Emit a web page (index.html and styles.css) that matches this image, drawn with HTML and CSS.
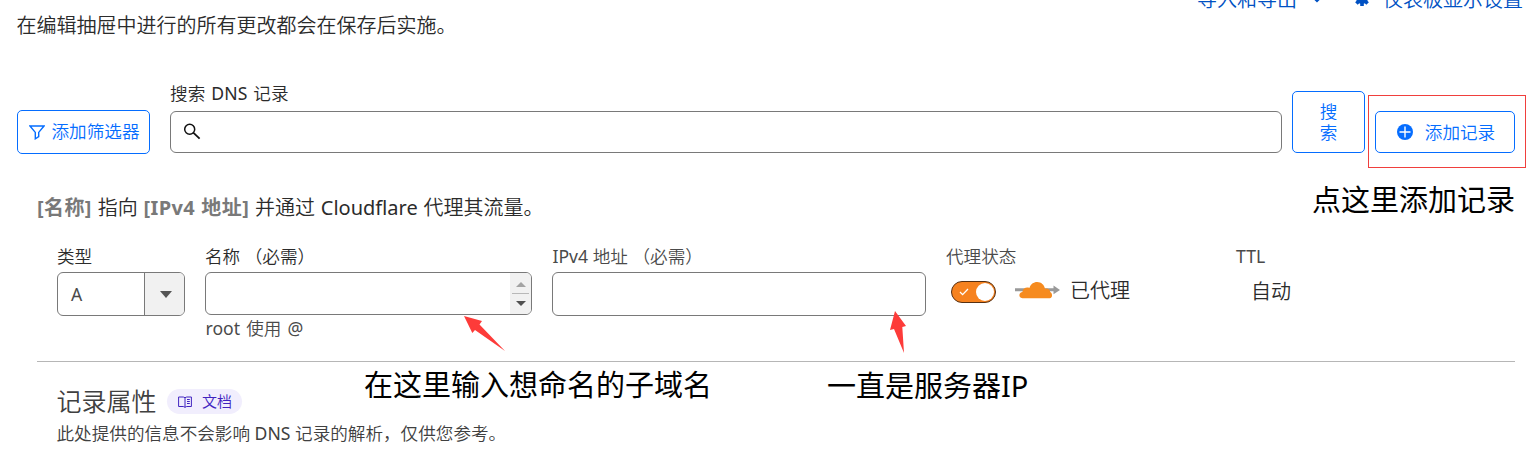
FILE: index.html
```
<!DOCTYPE html>
<html lang="zh-CN">
<head>
<meta charset="utf-8">
<title>DNS 记录</title>
<link rel="stylesheet" href="styles.css">
</head>
<body>
<main class="page">
  <header class="top">
    <p class="intro"><span>在编辑抽屉中进行的所有更改都会在保存后实施。</span></p>
    <nav class="links">
      <a class="link"><span>导入和导出</span>
        <svg class="caret" width="12" height="12" viewBox="0 0 12 12"><path d="M1 4 6 9l5-5" fill="none" stroke="currentColor" stroke-width="2.2"/></svg></a>
      <a class="link">
        <svg class="gear" width="16" height="16" viewBox="0 0 16 16"><circle cx="8" cy="8" r="4" fill="none" stroke="currentColor" stroke-width="4"/><path d="M8 0v16M0 8h16M2.400 2.400l11.200 11.200M13.600 2.400 2.400 13.600" stroke="currentColor" stroke-width="3.6" stroke-dasharray="3.500 9 3.500"/></svg>
        <span>仪表板显示设置</span></a>
    </nav>
  </header>

  <section class="toolbar">
    <button class="btn filter">
      <svg width="16" height="15" viewBox="0 0 16 15"><path d="M1 1h14L9.7 7.4v4.2L6.3 13.8V7.4z" fill="none" stroke="currentColor" stroke-width="1.4"/></svg>
      <span>添加筛选器</span></button>
    <div class="search">
      <label class="label">搜索 <span class="latin">DNS</span> 记录</label>
      <div class="input search-input">
        <svg width="18" height="17" viewBox="0 0 18 17"><circle cx="6.7" cy="6.2" r="5" fill="none" stroke="#111" stroke-width="1.5"/><path d="m10.3 9.7 6.3 6" stroke="#111" stroke-width="1.8"/></svg>
      </div>
    </div>
    <button class="btn submit"><span>搜<br>索</span></button>
    <button class="btn add">
      <svg width="16" height="16" viewBox="0 0 16 16"><circle cx="8" cy="8" r="8" fill="currentColor"/><path d="M8 2.500v11M2.500 8h11" stroke="#fff" stroke-width="1.4"/></svg>
      <span>添加记录</span></button>
  </section>

  <section class="record">
    <p class="summary"><b>[名称]</b> 指向 <b>[IPv4 地址]</b> 并通过 <span class="latin">Cloudflare</span> 代理其流量。</p>
    <div class="fields">
      <div class="field type">
        <label class="label">类型</label>
        <div class="input select"><span class="latin">A</span>
          <i><svg width="12" height="7" viewBox="0 0 12 7"><path d="M0 0h12L6 7z" fill="#555"/></svg></i></div>
      </div>
      <div class="field name">
        <label class="label">名称 （必需）</label>
        <div class="input textarea">
          <div class="spin">
            <svg width="10" height="5" viewBox="0 0 10 5"><path d="M0 5h10L5 0z" fill="#a3a3a3"/></svg>
            <hr>
            <svg width="10" height="5" viewBox="0 0 10 5"><path d="M0 0h10L5 5z" fill="#505050"/></svg>
          </div>
        </div>
        <span class="hint"><span class="latin">root</span> 使用 <span class="latin">@</span></span>
      </div>
      <div class="field ip">
        <label class="label soft"><span class="latin">IPv4</span> 地址 （必需）</label>
        <div class="input"></div>
      </div>
      <div class="field proxy">
        <label class="label soft">代理状态</label>
        <div class="status">
          <div class="toggle">
            <svg width="10" height="8" viewBox="0 0 10 8"><path d="m1 4 2.6 2.6L9 1" fill="none" stroke="#fff" stroke-width="1.3"/></svg>
            <span class="knob"></span>
          </div>
          <svg class="cloud" width="46" height="18" viewBox="0 0 46 18"><path d="M0 7.300h38.500V4.500l6.500 4.500-6.500 4.300v-3H0z" fill="#999"/><path d="M7.500 17.200C5 17.200 4.200 15.500 4.400 13.800c.2-1.700 1.700-2.500 3-2.800 .2-3.500 3.900-5.300 7-4C15.500 3.200 18.500 1 22.200 1c4 0 7 2.800 7.800 6.700 3-.7 5 .8 5.200 3.300 2.300.7 2.800 6.200-.5 6.200z" fill="#f68b1f"/></svg>
          <span>已代理</span>
        </div>
      </div>
      <div class="field ttl">
        <label class="label soft"><span class="latin">TTL</span></label>
        <span class="auto">自动</span>
      </div>
    </div>
  </section>

  <section class="attributes">
    <div class="heading">
      <h2>记录属性</h2>
      <a class="badge">
        <svg width="14" height="12" viewBox="0 0 14 12"><path d="M.6 1h4.700L7 1.700 8.700 1h4.700v9.500H8.700L7 11.300l-1.700-.8H.6zM7 1.700v9.500M9 3.500h2.800M9 5.500h2.800M9 7.500h2.800" fill="none" stroke="currentColor"/></svg>
        <span>文档</span></a>
    </div>
    <p>此处提供的信息不会影响 <span class="latin">DNS</span> 记录的解析，仅供您参考。</p>
  </section>

  <div class="frame"></div>
  <span class="note note-add">点这里添加记录</span>
  <span class="note note-name">在这里输入想命名的子域名</span>
  <span class="note note-ip">一直是服务器IP</span>
  <svg class="arrow arrow-name" width="42" height="36" viewBox="0 0 42 36"><path d="m0 0 18 5-2.500 3.500L41 35 11 14l-2.700 3z" fill="#fd3b39"/></svg>
  <svg class="arrow arrow-ip" width="18" height="43" viewBox="0 0 18 43"><path d="m5 0 11 15-3.700 1L14 42 4 18l-4 1z" fill="#fd3b39"/></svg>
</main>
</body>
</html>
```
FILE: styles.css
```
* { box-sizing: border-box; }
body {
  margin: 0;
  background: #fff;
  color: #2b2b2b;
  font: 350 17.6px/24px "Noto Sans", "Noto Sans CJK SC", sans-serif;
}
p, h2 { margin: 0; font-weight: 350; }
svg { display: block; flex: none; }
.latin { font-weight: 400; }
.page { position: relative; width: 1537px; height: 460px; overflow: hidden; }

.top { display: flex; justify-content: space-between; height: 84px; padding: 0 14px 0 16.5px; font-size: 20px; line-height: 26px; }
.intro { padding-top: 13px; }
.links { display: flex; gap: 31px; margin-top: -13px; color: #0051c3; }
.link { display: flex; align-items: center; height: 26px; white-space: nowrap; }
.caret { margin: -4px 0 0 14px; }
.gear { margin: -4px 13px 0 0; }

.toolbar { display: flex; align-items: flex-end; height: 70px; padding-left: 17px; }
.btn {
  display: flex; align-items: center; justify-content: center;
  padding: 0; border: 1px solid #056dff; border-radius: 5px;
  background: #fff; color: #056dff; font: inherit; height: 42px; margin-bottom: 1px;
}
.filter { width: 133px; height: 44px; gap: 7px; margin: 0 20px 0 0; padding-left: 1px; }
.filter span { margin-top: -2px; }
.search { width: 1112px; margin-right: 10px; padding-bottom: 1px; }
.label { display: block; height: 27px; line-height: 18px; white-space: pre; }
.search .label { word-spacing: 1px; letter-spacing: .15px; }
.input { height: 44px; border: 1px solid #797979; border-radius: 6px; background: #fff; }
.search-input { display: flex; align-items: center; height: 42px; padding-left: 13px; }
.search-input svg { margin: -1px 0 0 -1px; }
.submit { width: 73px; height: 62px; line-height: 21px; margin-right: 10px; }
.add { width: 140px; gap: 12px; padding-left: 2px; }

.record { height: 208px; margin: 0 22px 0 37px; border-bottom: 1px solid #b6b6b6; }
.summary { padding-top: 41px; height: 93px; font-size: 20px; line-height: 26px; word-spacing: .6px; }
.summary b { color: #797979; font-weight: 700; letter-spacing: .4px; }
.fields { display: flex; padding-left: 20px; }
.fields .label { height: 25px; line-height: 19px; }
.soft { color: #4a4a4a; }
.type { width: 128px; margin-right: 20px; }
.name { width: 327px; margin-right: 20px; }
.ip { width: 374px; margin-right: 20px; }
.ip .label { padding-left: .5px; }
.proxy { width: 290px; }
.select { display: flex; justify-content: space-between; overflow: hidden; line-height: 42px; color: #4a4a4a; }
.select span { padding-left: 13px; }
.select i { display: flex; align-items: center; justify-content: center; width: 40px; padding-left: 2px; border-left: 1px solid #797979; background: #f1f1f1; }
.textarea { display: flex; justify-content: flex-end; height: 43px; overflow: hidden; }
.spin { display: flex; flex-direction: column; align-items: center; width: 21px; padding-top: 9px; background: #f1f1f1; }
.spin hr { width: 17px; margin: 6px 0 7px; border: 0; border-top: 1px solid #b8b8b8; }
.hint { display: block; padding: 1px 0 0 .5px; color: #4a4a4a; word-spacing: 1.5px; }
.status { display: flex; padding: 9px 0 0 5px; font-size: 20px; line-height: 20px; }
.toggle { display: flex; align-items: center; justify-content: space-between; width: 45px; height: 22px; padding: 0 1px 0 7px; border: 1px solid #563013; border-radius: 11px; background: #f6821f; }
.knob { width: 18px; height: 18px; border-radius: 50%; background: #fff; }
.cloud { margin: 0 9px 0 19px; }
.auto { display: block; padding: 8px 0 0 15px; font-size: 20px; }

.attributes { padding: 25px 0 0 56.5px; color: #404040; }
.heading { display: flex; align-items: center; height: 29px; }
.heading h2 { width: 110.5px; margin-top: -2px; font-size: 25px; line-height: 28px; }
.badge { display: flex; align-items: center; gap: 10px; width: 75px; height: 25px; padding-left: 11px; border-radius: 13px; background: #f1eefd; color: #4124c0; font-size: 15px; }
.badge span { margin-top: -2px; }
.attributes p { padding-top: 5px; }

.frame { position: absolute; left: 1368px; top: 95px; width: 158px; height: 73px; border: 1px solid #f03f3d; }
.note { position: absolute; color: #000; font-size: 29px; line-height: 36px; font-weight: 400; white-space: nowrap; }
.note-add { left: 1312px; top: 182px; }
.note-name { left: 364px; top: 367px; }
.note-ip { left: 827px; top: 368px; }
.arrow { position: absolute; }
.arrow-name { left: 464px; top: 316px; }
.arrow-ip { left: 890px; top: 311px; }
```
